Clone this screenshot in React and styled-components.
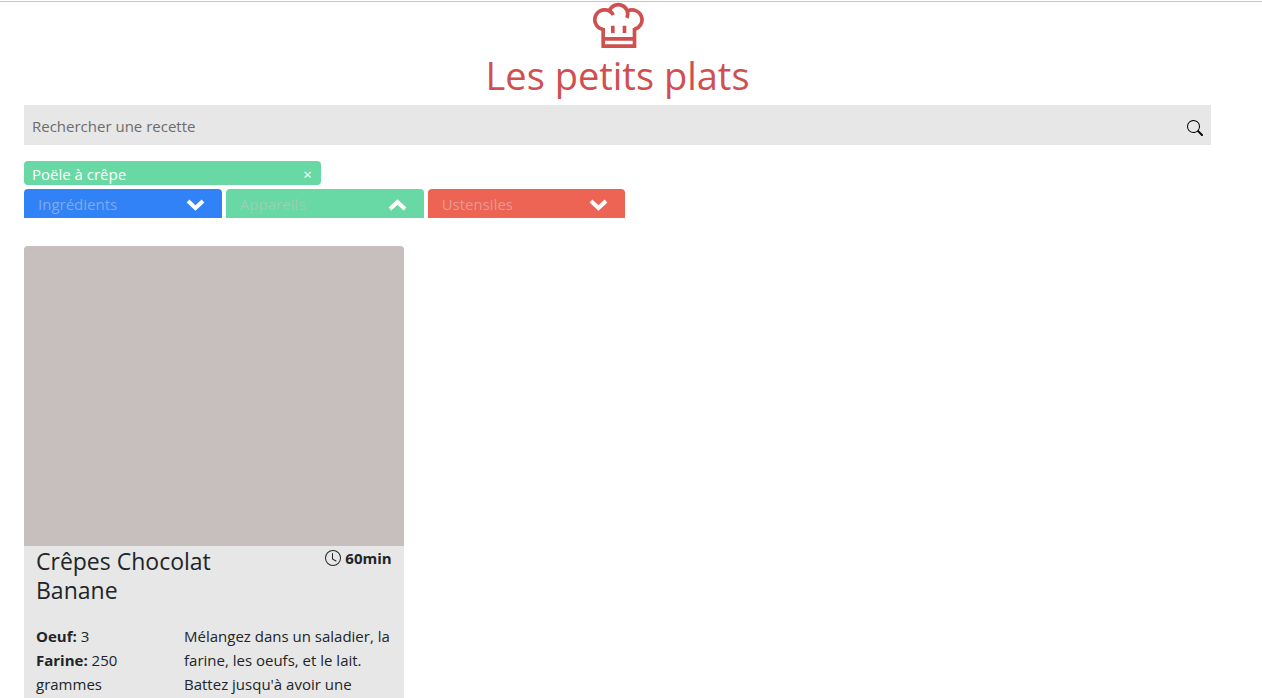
import React from "react";
import styled, { createGlobalStyle } from "styled-components";
import { BsSearch, BsClock } from "react-icons/bs";

const GlobalStyle = createGlobalStyle`
  *, *::before, *::after { box-sizing: border-box; }
  body {
    margin: 0;
    background: #fff;
    color: #212529;
    font: 400 15px/24px "Segoe UI", "Open Sans", "Noto Sans", sans-serif;
  }
`;

const Page = styled.div`
  display: flex;
  flex-direction: column;
  min-height: 100vh;
  padding: 1px 51px 0 24px;
  background: linear-gradient(#c8c8c8, #c8c8c8) 0 1px / 100% 1px no-repeat;
`;

const Header = styled.header`
  display: flex;
  flex-direction: column;
  align-items: center;
  color: #d04f4f;
`;

const Logo = styled.svg`
  width: 52px;
  height: 47px;
  fill: none;
  stroke: currentColor;
  stroke-width: 11;
`;

const Title = styled.h1`
  margin: 3px 0 6px;
  font-size: 38px;
  line-height: 48px;
  font-weight: 400;
`;

const SearchBar = styled.form`
  display: flex;
  align-items: center;
  height: 40px;
  padding: 6px 8px 0;
  margin-bottom: 16px;
  background: #e7e7e7;
`;

const SearchInput = styled.input`
  flex: 1;
  min-width: 0;
  padding: 0 0 4px;
  border: 0;
  outline: 0;
  background: transparent;
  font: inherit;
  &::placeholder { color: #6c6c6c; opacity: 1; }
`;

const IconButton = styled.button`
  display: flex;
  padding: 0;
  border: 0;
  background: transparent;
  color: ${(p) => p.$color || "#000"};
  font: inherit;
  cursor: pointer;
`;

const Tag = styled.div`
  display: flex;
  align-items: center;
  justify-content: space-between;
  width: 25%;
  height: 24px;
  padding: 2px 9px 0 8px;
  margin-bottom: 4px;
  border-radius: 4px;
  background: #68d9a4;
  color: #fff;
`;

const Filters = styled.div`
  display: flex;
  gap: 4px;
  margin-bottom: 28px;
`;

const Filter = styled.div`
  display: flex;
  align-items: center;
  width: calc(100% / 6);
  height: 29px;
  padding: 2px 17px 0 14px;
  border-radius: 4px 4px 0 0;
  background: ${(p) => p.$color};
`;

const FilterInput = styled.input`
  flex: 1;
  min-width: 0;
  padding: 0 0 2px;
  border: 0;
  outline: 0;
  background: transparent;
  color: #fff;
  font: inherit;
  &::placeholder { color: ${(p) => p.$hint}; opacity: 1; }
`;

const Chevron = styled.svg`
  width: 19px;
  height: 12px;
  fill: none;
  stroke: currentColor;
  stroke-width: 4;
  transform: ${(p) => (p.$open ? "rotate(180deg)" : "none")};
`;

const Recipes = styled.main`
  flex: 1;
  display: grid;
  grid-template-columns: repeat(3, minmax(0, 1fr));
  gap: 24px;
`;

const Card = styled.article`
  border-radius: 4px 4px 0 0;
  overflow: hidden;
  background: #e7e7e7;
`;

const Photo = styled.div`
  height: 300px;
  background: #c7bebe;
`;

const CardHead = styled.div`
  display: flex;
  justify-content: space-between;
  align-items: flex-start;
  padding: 0 12px 19px;
`;

const RecipeName = styled.h2`
  width: 200px;
  margin: 0;
  padding-top: 1px;
  font-size: 23px;
  line-height: 29px;
  font-weight: 400;
`;

const Duration = styled.div`
  display: flex;
  align-items: center;
  gap: 4px;
  font-weight: 700;
`;

const CardBody = styled.div`
  display: grid;
  grid-template-columns: 124px minmax(0, 1fr);
  gap: 24px;
  padding: 0 8px 0 12px;
`;

const Ingredients = styled.ul`
  margin: 0;
  padding: 0;
  list-style: none;
`;

const Steps = styled.p`
  margin: 0;
`;

const filters = [
  { name: "Ingrédients", color: "#3282f7", hint: "#7fa9e9" },
  { name: "Appareils", color: "#68d9a4", hint: "#97d0b4", open: true },
  { name: "Ustensiles", color: "#ed6454", hint: "#e59a93" },
];

export default function App() {
  return (
    <>
      <GlobalStyle />
      <Page>
        <Header>
          <Logo viewBox="-4 -3 156 141" aria-hidden="true">
            <path d="M60 39A29.5 29.5 0 1 0 29 82" />
            <path d="M49 25A28 28 0 1 1 101 48" />
            <path d="M103 27A29.5 29.5 0 1 1 123 82" />
            <path d="M29.5 78V132.5H123.5V78M29.5 110.5H123.5M58.5 71V93M93.5 71V93" />
          </Logo>
          <Title>Les petits plats</Title>
        </Header>
        <SearchBar role="search" onSubmit={(e) => e.preventDefault()}>
          <SearchInput aria-label="Rechercher une recette" placeholder="Rechercher une recette" />
          <IconButton aria-label="Rechercher"><BsSearch size={16} /></IconButton>
        </SearchBar>
        <Tag>
          Poële à crêpe
          <IconButton $color="#fff" aria-label="Retirer Poële à crêpe">×</IconButton>
        </Tag>
        <Filters>
          {filters.map((f) => (
            <Filter key={f.name} $color={f.color}>
              <FilterInput aria-label={f.name} placeholder={f.name} $hint={f.hint} />
              <IconButton $color="#fff" aria-label={`Liste ${f.name}`} aria-expanded={!!f.open}>
                <Chevron viewBox="0 0 19 12" $open={f.open}>
                  <path d="M2 2L9.5 9L17 2" />
                </Chevron>
              </IconButton>
            </Filter>
          ))}
        </Filters>
        <Recipes>
          <Card>
            <Photo />
            <CardHead>
              <RecipeName>Crêpes Chocolat Banane</RecipeName>
              <Duration><BsClock size={16} />60min</Duration>
            </CardHead>
            <CardBody>
              <Ingredients>
                <li><b>Oeuf:</b> 3</li>
                <li><b>Farine:</b> 250 grammes</li>
              </Ingredients>
              <Steps>
                Mélangez dans un saladier, la farine, les oeufs, et le lait. Battez jusqu'à avoir une
              </Steps>
            </CardBody>
          </Card>
        </Recipes>
      </Page>
    </>
  );
}
